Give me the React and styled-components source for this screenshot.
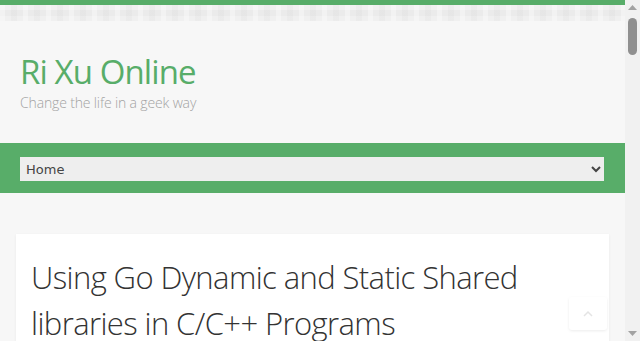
import React from "react";
import styled, { createGlobalStyle } from "styled-components";

const Global = createGlobalStyle`
  html, body { overflow: hidden; }
  body {
    margin: 0;
    background: #f7f7f7;
    font-family: "Open Sans", "DejaVu Sans", sans-serif;
  }
`;

const Shell = styled.div`
  display: flex;
  height: 100vh;
  overflow: hidden;
`;

const Page = styled.div`
  flex: 1;
  min-width: 0;
  overflow: hidden;
  position: relative;
`;

const ScrollBar = styled.div`
  width: 15px;
  flex: none;
  background: #f1f1f1;
  display: flex;
  flex-direction: column;
  align-items: center;
`;

const ArrowBtn = styled.div`
  height: 15px;
  width: 15px;
  display: flex;
  align-items: center;
  justify-content: center;
  margin-top: ${(p) => (p.$down ? "auto" : "0")};
`;

const Thumb = styled.div`
  margin-top: 3px;
  width: 9px;
  height: 37px;
  border-radius: 5px;
  background: #909090;
`;

const TopLine = styled.div`
  height: 5px;
  background: #58ad69;
`;

const Texture = styled.div`
  height: 16px;
  background-color: #ebebeb;
  background-image:
    repeating-linear-gradient(90deg, rgba(255,255,255,0.35) 0 5px, transparent 5px 11px, rgba(0,0,0,0.02) 11px 17px, transparent 17px 23px),
    linear-gradient(180deg, rgba(255,255,255,0.3) 0 5px, transparent 5px 11px, rgba(255,255,255,0.25) 11px 16px);
`;

const Header = styled.header`
  padding: 31px 20px 32px;
  height: 59px;
  display: flex;
  flex-direction: column;
`;

const SiteTitle = styled.h1`
  margin: 0;
  font-size: 33px;
  font-weight: 400;
  line-height: 40px;
  color: #58ad69;
  letter-spacing: -0.9px;
`;

const Tagline = styled.p`
  margin: 2px 0 0;
  font-size: 14px;
  font-weight: 300;
  line-height: 18px;
  color: #a3a3a3;
  letter-spacing: -0.15px;
`;

const Nav = styled.nav`
  background: #58ad69;
  padding: 14px 21px 12px 20px;
`;

const Select = styled.select`
  display: block;
  width: 100%;
  height: 24px;
  border: none;
  background: #eeeeee;
  color: #444;
  font-family: "DejaVu Sans", sans-serif;
  font-size: 13px;
  padding: 0 2px;
  border-radius: 0;
`;

const Main = styled.main`
  padding: 41px 16px 40px;
`;

const Card = styled.article`
  background: #fff;
  box-shadow: 0 1px 3px rgba(0,0,0,0.06);
  padding: 20px 15px 30px;
  min-height: 400px;
`;

const PostTitle = styled.h2`
  margin: 0;
  font-size: 31px;
  font-weight: 300;
  line-height: 46px;
  color: #333;
  letter-spacing: -0.6px;
`;

const BackTop = styled.button`
  position: fixed;
  right: 33px;
  bottom: 11px;
  width: 38px;
  height: 33px;
  border: none;
  border-radius: 3px;
  background: #fff;
  box-shadow: 0 1px 3px rgba(0,0,0,0.08);
  display: flex;
  align-items: center;
  justify-content: center;
  padding: 0;
`;

function Triangle({ down }) {
  return (
    <svg width="9" height="5" viewBox="0 0 9 5">
      <path d={down ? "M0 0 H9 L4.5 5 Z" : "M0 5 H9 L4.5 0 Z"} fill="#a3a3a3" />
    </svg>
  );
}

export default function App() {
  return (
    <Shell>
      <Global />
      <Page>
        <TopLine />
        <Texture />
        <Header>
          <SiteTitle>Ri Xu Online</SiteTitle>
          <Tagline>Change the life in a geek way</Tagline>
        </Header>
        <Nav>
          <Select defaultValue="home">
            <option value="home">Home</option>
          </Select>
        </Nav>
        <Main>
          <Card>
            <PostTitle>Using Go Dynamic and Static Shared libraries in C/C++ Programs</PostTitle>
          </Card>
        </Main>
        <BackTop aria-label="Back to top">
          <svg width="12" height="8" viewBox="0 0 12 8">
            <path d="M2 6 L6 2 L10 6" fill="none" stroke="#e4e4e4" strokeWidth="1.5" />
          </svg>
        </BackTop>
      </Page>
      <ScrollBar>
        <ArrowBtn><Triangle /></ArrowBtn>
        <Thumb />
        <ArrowBtn $down><Triangle down /></ArrowBtn>
      </ScrollBar>
    </Shell>
  );
}
